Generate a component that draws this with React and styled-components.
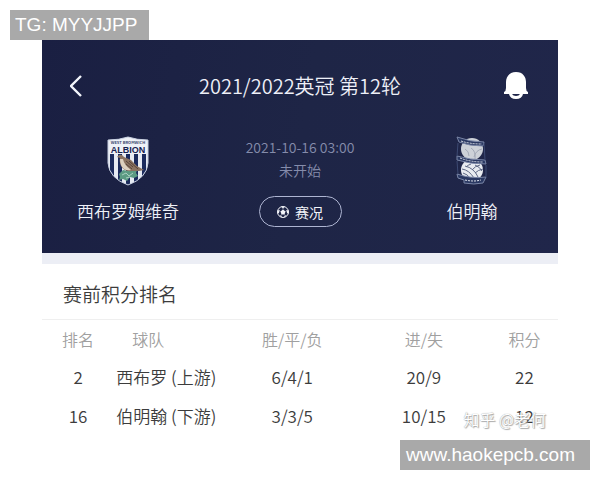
import styled, { createGlobalStyle } from "styled-components";

const equipos = [
  { puesto: 2, nombre: "西布罗 (上游)", record: "6/4/1", goles: "20/9", puntos: 22 },
  { puesto: 16, nombre: "伯明翰 (下游)", record: "3/3/5", goles: "10/15", puntos: 12 },
];

function EscudoAlbion() {
  return (
    <svg width="42" height="50" viewBox="0 0 42 50" role="img" aria-label="西布罗姆维奇">
      <defs>
        <clipPath id="albion">
          <path d="M1 4 Q12 4 21 1 Q30 4 41 4 V27 Q40 42 21 49 Q2 42 1 27 Z" />
        </clipPath>
      </defs>
      <g clipPath="url(#albion)">
        <rect width="42" height="50" fill="#e6eaf2" />
        <g fill="#1b2a5c">
          <rect x="3" y="18" width="4" height="33" />
          <rect x="11" y="18" width="4" height="33" />
          <rect x="19" y="18" width="4" height="33" />
          <rect x="27" y="18" width="4" height="33" />
          <rect x="35" y="18" width="4" height="33" />
        </g>
        <rect y="0" width="42" height="18" fill="#eef1f7" />
        <text x="21" y="8" textAnchor="middle" fontSize="4" fontWeight="700" fill="#3b4870">WEST BROMWICH</text>
        <text x="21" y="17" textAnchor="middle" fontFamily="Liberation Sans, sans-serif" fontSize="9" fontWeight="700" fill="#16224f">ALBION</text>
      </g>
      <path d="M12 38 l4 -4 5 1 4 -2 5 1 -1 3 2 3 -4 2 -4 -1 -3 4 -4 -2 -4 1 1 -3 Z" fill="#5c9b83" />
      <path d="M15 39 l4 -2 3 3 4 -3 M19 42 l4 -1" fill="none" stroke="#a9d0c0" />
      <path d="M11 20 Q14 17 17 21 L24 24 L30 30 L37 34 L32 35 L25 35 Q17 36 14 30 Q12 25 13 22 L10 21 Z" fill="#8b7361" />
      <path d="M13 23 Q13 30 17 33 Q20 35 24 34 Q17 29 16 23 Z" fill="#ddd0bf" />
      <path d="M19 25 l7 6 M22 25 l9 8 M19 28 l6 5" stroke="#574339" fill="none" />
      <path d="M1 4 Q12 4 21 1 Q30 4 41 4 V27 Q40 42 21 49 Q2 42 1 27 Z" fill="none" stroke="#c6cedf" strokeWidth="1" />
    </svg>
  );
}

function EscudoBirmingham() {
  return (
    <svg width="32" height="50" viewBox="0 0 32 50" role="img" aria-label="伯明翰">
      <circle cx="16" cy="13" r="11" fill="#cdd1d8" />
      <path d="M9 13 q4 2 4 7 M15 12 q5 3 4 11 M26 13 q-6 1 -8 8" fill="none" stroke="#a3a9b7" />
      <circle cx="16" cy="34" r="11" fill="#e8ebf0" />
      <path d="M6 33 q7 1 12 9 M7 37 q5 1 7 6 M9 30 q9 2 13 11 M15 28 q-3 1 -5 3 M19 29 q5 2 7 6 M16 34 q3 -4 8 -5 M19 37 q3 -3 8 -4" fill="none" stroke="#5d6784" />
      <g fill="#2a3862" stroke="#7985a6" strokeWidth="1">
        <path d="M1 1 Q14 6 28 6 L27 10 Q13 10 3 6 Z" />
        <path d="M1 20 Q14 24 29 24 L30 28 Q14 28 1 24 Z" />
        <path d="M1 38 Q15 43 30 41 L27 47 Q18 49 8 47 L8 44 L2 42 Z" />
      </g>
      <path d="M5 5 Q14 8 26 8 M4 22 Q14 26 27 26 M9 44 Q18 46 25 44" fill="none" stroke="#dfe3ec" strokeDasharray="2 1" />
      <path d="M2 7 L1 20 M28 7 L29 24 M1 25 L2 38 M30 29 V41" stroke="#3d4a73" />
    </svg>
  );
}

function Balon() {
  return (
    <svg width="12" height="12" viewBox="0 0 24 24" aria-hidden="true">
      <circle cx="12" cy="12" r="11" fill="none" stroke="#f3f5fa" strokeWidth="2" />
      <path d="M12 7 L17 11 L15 17 H9 L7 11 Z M8 1 H16 L12 5 Z M1 9 L5 8 L4 14 L1 15 Z M23 9 L19 8 L20 14 L23 15 Z M5 20 L8 19 L11 23 Z M19 20 L16 19 L13 23 Z" fill="#f3f5fa" />
      <path d="M12 7 V4 M17 11 L20 9 M15 17 L17 20 M9 17 L7 20 M7 11 L4 9" stroke="#f3f5fa" strokeWidth="1" />
    </svg>
  );
}

export default function App() {
  return (
    <>
      <GlobalStyle />
      <Pagina>
        <Etiqueta>TG: MYYJJPP</Etiqueta>
        <Panel>
          <Cabecera>
            <Barra>
              <BotonIcono aria-label="返回">
                <svg width="14" height="22" viewBox="0 0 14 22">
                  <path d="M11 1 L1 11 L11 21" fill="none" stroke="#f3f5fb" strokeWidth="2.4" />
                </svg>
              </BotonIcono>
              <Titulo>2021/2022英冠 第12轮</Titulo>
              <BotonIcono aria-label="提醒">
                <svg width="26" height="28" viewBox="0 0 26 28">
                  <path d="M13 0 C6 0 3 5 3 10 V16 Q3 19 1 20 V22 H6 Q7 27 13 27 Q19 27 20 22 H25 V20 Q23 19 23 16 V10 C23 5 20 0 13 0 Z" fill="#fff" />
                  <path d="M9 22 H17 Q16 24 13 24 Q10 24 9 22 Z" fill="#20264a" />
                </svg>
              </BotonIcono>
            </Barra>
            <Partido>
              <Equipo>
                <EscudoAlbion />
                <span>西布罗姆维奇</span>
              </Equipo>
              <Centro>
                <time>2021-10-16 03:00</time>
                <span>未开始</span>
                <BotonDirecto>
                  <Balon />
                  赛况
                </BotonDirecto>
              </Centro>
              <Equipo>
                <EscudoBirmingham />
                <span>伯明翰</span>
              </Equipo>
            </Partido>
          </Cabecera>
          <Subtitulo>赛前积分排名</Subtitulo>
          <Tabla>
            <thead>
              <tr>
                <Th $ancho="14%">排名</Th>
                <Th $ancho="22%" $equipo>球队</Th>
                <Th $ancho="25%">胜/平/负</Th>
                <Th $ancho="26%">进/失</Th>
                <Th $ancho="13%">积分</Th>
              </tr>
            </thead>
            <tbody>
              {equipos.map((e) => (
                <tr key={e.puesto}>
                  <Td>{e.puesto}</Td>
                  <Td $equipo>{e.nombre}</Td>
                  <Td>{e.record}</Td>
                  <Td>{e.goles}</Td>
                  <Td>{e.puntos}</Td>
                </tr>
              ))}
            </tbody>
          </Tabla>
          <Marca>知乎 @老何</Marca>
        </Panel>
        <Etiqueta $derecha>www.haokepcb.com</Etiqueta>
      </Pagina>
    </>
  );
}

const GlobalStyle = createGlobalStyle`
  * {
    box-sizing: border-box;
  }
  body {
    margin: 0;
    background-color: #fff;
    font-family: "Noto Sans CJK SC", sans-serif;
    font-weight: 350;
  }
`;
const Pagina = styled.div`
  display: flex;
  flex-direction: column;
  padding: 10px;
`;
const Etiqueta = styled.div`
  align-self: ${(p) => (p.$derecha ? "flex-end" : "flex-start")};
  padding: ${(p) => (p.$derecha ? "0 15px 0 6px" : "0 12px 0 5px")};
  background-color: #a9a9a9;
  color: #fff;
  font-family: "Liberation Sans", sans-serif;
  font-size: 19px;
  line-height: 30px;
`;
const Panel = styled.main`
  position: relative;
  margin: 0 32px;
`;
const Cabecera = styled.header`
  padding: 28px 28px 26px;
  border-bottom: 11px solid #eceef5;
  background: linear-gradient(100deg, #1a1f42, #1e2546 50%, #20264a);
  background-clip: padding-box;
  color: #eef0f8;
`;
const Barra = styled.div`
  display: grid;
  grid-template-columns: 28px 1fr 28px;
  align-items: center;
  height: 36px;
`;
const BotonIcono = styled.button`
  display: flex;
  justify-content: center;
  width: 100%;
  padding: 0;
  border: none;
  background: none;
  cursor: pointer;
  &:first-child {
    justify-content: flex-start;
  }
`;
const Titulo = styled.h1`
  margin: 0;
  font-size: 20px;
  font-weight: 350;
  line-height: 28px;
  text-align: center;
`;
const Partido = styled.div`
  display: grid;
  grid-template-columns: 116px 1fr 116px;
  margin-top: 32px;
`;
const Equipo = styled.div`
  display: flex;
  flex-direction: column;
  align-items: center;
  gap: 12px;
  font-size: 17px;
  line-height: 26px;
`;
const Centro = styled.div`
  display: flex;
  flex-direction: column;
  align-items: center;
  color: #858cab;
  font-size: 14px;
  line-height: 23px;
`;
const BotonDirecto = styled.button`
  display: flex;
  align-items: center;
  justify-content: center;
  gap: 6px;
  width: 83px;
  height: 31px;
  margin-top: 14px;
  padding: 0;
  border: 1px solid #aeb5d2;
  border-radius: 16px;
  background: none;
  color: #f3f5fa;
  font-family: inherit;
  font-size: 14px;
  cursor: pointer;
`;
const Subtitulo = styled.h2`
  margin: 0;
  padding: 16px 21px 11px;
  border-bottom: 1px solid #efefef;
  color: #3c3c3c;
  font-size: 19px;
  font-weight: 350;
  line-height: 28px;
`;
const Tabla = styled.table`
  width: 100%;
  margin-bottom: 5px;
  border-collapse: collapse;
  table-layout: fixed;
`;
const Th = styled.th`
  width: ${(p) => p.$ancho};
  height: 37px;
  padding: ${(p) => (p.$equipo ? "0 0 0 18px" : "0")};
  color: #a0a0a0;
  font-size: 16px;
  font-weight: 350;
  text-align: ${(p) => (p.$equipo ? "left" : "center")};
`;
const Td = styled.td`
  height: 39px;
  padding: ${(p) => (p.$equipo ? "0 0 0 2px" : "0")};
  color: #3c3c3c;
  font-size: 17px;
  text-align: ${(p) => (p.$equipo ? "left" : "center")};
  white-space: nowrap;
`;
const Marca = styled.span`
  position: absolute;
  right: 12px;
  bottom: 9px;
  color: #fff;
  font-size: 16px;
  line-height: 24px;
  text-shadow: 0 0 1px #888, 1px 1px 1px #aaa;
`;
